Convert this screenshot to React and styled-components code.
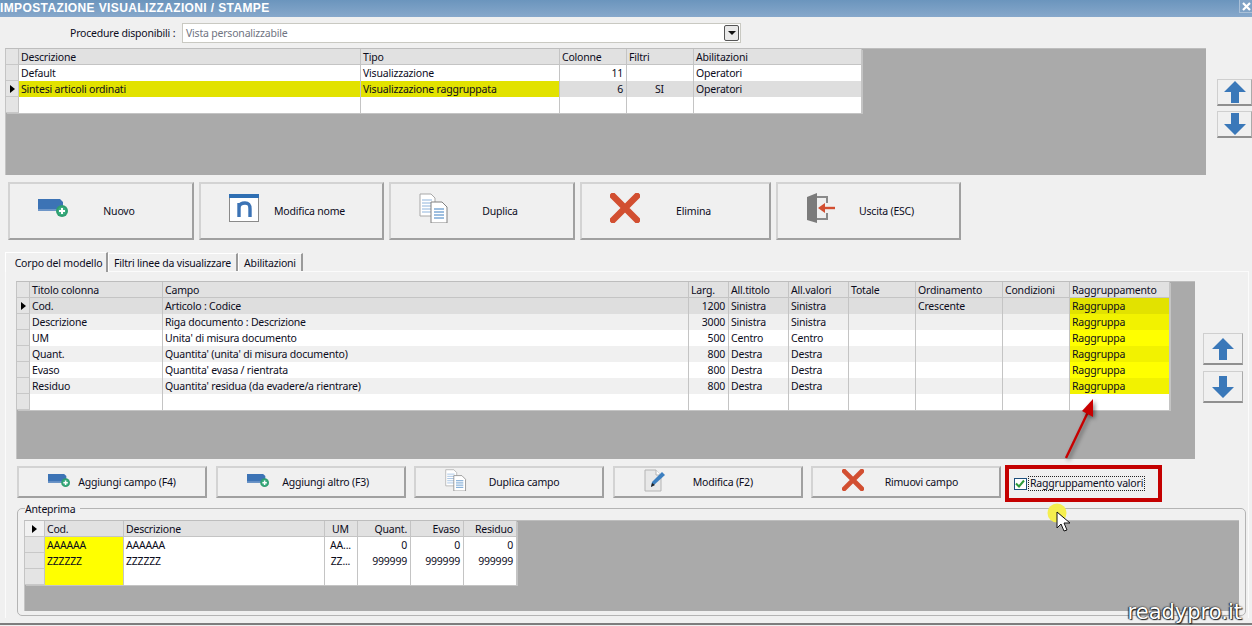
import React from 'react';
import styled, {createGlobalStyle} from 'styled-components';

const GlobalStyle = createGlobalStyle`
  html, body {
    margin: 0;
    padding: 0;
    background: #f0f0f0;
  }
  * {
    box-sizing: border-box;
  }
`;

const Window = styled.div`
  position: relative;
  width: 1252px;
  height: 626px;
  overflow: hidden;
  background: #f0f0f0;
  color: #0c0c1c;
  font-family: "Noto Sans", "DejaVu Sans", sans-serif;
  font-size: 10.5px;
  letter-spacing: -0.2px;
`;

const TitleBar = styled.div`
  display: flex;
  justify-content: space-between;
  height: 17px;
  background: linear-gradient(#6b95bd, #87a8cb);
  color: #fff;
`;

const Title = styled.span`
  font-family: "Liberation Sans", sans-serif;
  font-weight: bold;
  font-size: 12px;
  line-height: 17px;
  letter-spacing: 0.38px;
`;

const CloseButton = styled.div`
  display: flex;
  align-items: center;
  justify-content: center;
  width: 13px;
  height: 13px;
  background: #7fa2c6;
  border-left: 1px solid #a9c0d8;
  border-bottom: 1px solid #a9c0d8;
`;

const ProcedureRow = styled.div`
  display: flex;
  align-items: center;
  height: 20px;
  margin-top: 6px;
  padding-left: 70px;
`;

const ProcedureLabel = styled.span`
  width: 112px;
  white-space: nowrap;
`;

const Select = styled.div`
  display: flex;
  align-items: center;
  justify-content: space-between;
  width: 559px;
  height: 20px;
  padding: 0 1px 0 3px;
  background: #fff;
  border: 1px solid #c9c9c2;
  color: #6f7482;
`;

const SelectButton = styled.div`
  display: flex;
  align-items: center;
  justify-content: center;
  width: 15px;
  height: 16px;
  background: #e9e9e9;
  border: 1px solid #555;
  border-radius: 2px;
  &::after {
    content: '';
    border-left: 4px solid transparent;
    border-right: 4px solid transparent;
    border-top: 4px solid #111;
  }
`;

const TopSection = styled.div`
  display: flex;
  gap: 11px;
  margin-top: 5px;
  padding-left: 5px;
`;

const Grid = styled.div`
  flex: none;
  width: ${props => props.$width}px;
  height: ${props => props.$height}px;
  background: #aaa;
  border-top: 1px solid #bdbdbd;
  border-left: 1px solid #c4c4c4;
`;

const Table = styled.div`
  width: fit-content;
  background: #fff;
  box-shadow: 1px 1px 0 #c4c4c4;
`;

const Row = styled.div`
  display: grid;
  grid-template-columns: ${props => props.$columns};
  height: 16px;
  background: ${props => props.$background};
`;

const Cell = styled.div`
  height: 16px;
  padding: 0 3px 0 2px;
  overflow: hidden;
  white-space: nowrap;
  line-height: 17px;
  text-align: ${props => props.$align || 'left'};
  background: ${props => props.$background || 'transparent'};
  border-right: 1px solid #c4c4c4;
`;

const HeadCell = styled(Cell)`
  background: #e1e1e1;
  border-bottom: 1px solid #c4c4c4;
  line-height: 16px;
`;

const Indicator = styled.div`
  display: flex;
  align-items: center;
  justify-content: center;
  height: 16px;
  background: ${props => props.$white ? '#f1f1f1' : '#e4e4e4'};
  border-right: 1px solid #c4c4c4;
  border-bottom: 1px solid #c8c8c8;
  ${props => props.$current && `
    &::after {
      content: '';
      border-top: 4px solid transparent;
      border-bottom: 4px solid transparent;
      border-left: 5px solid #000;
    }
  `}
`;

const SideButtons = styled.div`
  display: flex;
  flex-direction: column;
  flex: none;
  gap: ${props => props.$gap}px;
  margin-top: ${props => props.$top}px;
`;

const ArrowButton = styled.div`
  display: flex;
  align-items: center;
  justify-content: center;
  width: ${props => props.$width}px;
  height: ${props => props.$height}px;
  background: #f0f0f0;
  border: 1px solid #cfcfcf;
  border-bottom: 2px solid #8f8f8f;
  border-right: 1px solid #aaa;
`;

const ActionRow = styled.div`
  display: flex;
  align-items: flex-start;
  gap: ${props => props.$gap}px;
  height: ${props => props.$height}px;
  margin: ${props => props.$margin};
`;

const ActionButton = styled.div`
  display: grid;
  grid-template-columns: ${props => props.$small ? '22px' : '30px'} 1fr;
  align-items: center;
  flex: none;
  width: ${props => props.$width}px;
  height: 100%;
  padding: ${props => props.$small ? '0 21px 4px 29px' : '0 22px 6px 28px'};
  background: #f0f0f0;
  border-top: 2px solid #d3d3d3;
  border-left: 2px solid #d3d3d3;
  border-right: 2px solid #a0a0a0;
  border-bottom: 2px solid #a0a0a0;
`;

const ActionLabel = styled.span`
  text-align: center;
  white-space: nowrap;
  padding-top: ${props => props.$small ? 4 : 6}px;
`;

const Tabs = styled.div`
  display: flex;
  align-items: flex-end;
  height: 20px;
  margin-top: 11px;
  padding-left: 5px;
`;

const Tab = styled.div`
  display: flex;
  align-items: center;
  justify-content: center;
  width: ${props => props.$width}px;
  height: ${props => props.$active ? 20 : 18}px;
  margin-bottom: ${props => props.$active ? -1 : 0}px;
  padding-left: ${props => props.$active ? 5 : 0}px;
  padding-top: 1px;
  white-space: nowrap;
  background: #f0f0f0;
  border-top: 1px solid #fff;
  border-left: 1px solid #fff;
  border-right: 2px solid #9a9a9a;
  position: relative;
`;

const Panel = styled.div`
  width: 1244px;
  height: 347px;
  margin-left: 5px;
  padding: 9px 0 0 10px;
  border: 1px solid #fbfbfb;
  border-bottom: none;
`;

const GridRow = styled.div`
  display: flex;
  gap: 8px;
`;

const Group = styled.div`
  position: relative;
  width: 1229px;
  height: 108px;
  margin-left: 1px;
  padding: 11px 6px 0;
  border: 1px solid #b4b4b4;
  border-radius: 5px;
`;

const GroupTitle = styled.span`
  position: absolute;
  top: -7px;
  left: 7px;
  padding: 0 5px 0 0;
  line-height: 15px;
  background: #f0f0f0;
`;

const CheckFrame = styled.div`
  display: flex;
  align-items: center;
  flex: none;
  width: 157px;
  height: 37px;
  margin: -1px 0 0 -5px;
  padding-left: 5px;
  border: 4px solid #c40000;
`;

const CheckBox = styled.div`
  display: flex;
  align-items: center;
  justify-content: center;
  width: 13px;
  height: 12px;
  margin-right: 2px;
  background: #fff;
  border: 1px solid #1d4f7c;
`;

const CheckLabel = styled.span`
  padding: 0 1px;
  line-height: 13px;
  outline: 1px dotted #222;
  white-space: nowrap;
`;

const BottomLine = styled.div`
  position: absolute;
  left: 0;
  right: 0;
  bottom: 1px;
  height: 2px;
  background: #7d7d7d;
`;

const Watermark = styled.span`
  position: absolute;
  right: 10px;
  bottom: 1px;
  font-family: "DejaVu Sans", sans-serif;
  font-size: 21px;
  line-height: 26px;
  letter-spacing: 0;
  color: #fff;
  text-shadow: 0 0 2px #111, 1px 1px 1px #222, -1px 0 1px #333;
`;

const Overlay = styled.svg`
  position: absolute;
  left: ${props => props.$left}px;
  top: ${props => props.$top}px;
  pointer-events: none;
`;

const AddIcon = ({small}) => (
   <svg width={small ? 22 : 30} height={small ? 15 : 20} viewBox="0 0 30 20">
      <path d="M0 1h22l3 3v9H0z" fill="#3c73b5"/>
      <path d="M0 11h25v2H0z" fill="#6e96c8"/>
      <circle cx="24" cy="13" r="6" fill="#2f9e70"/>
      <circle cx="24" cy="13" r="4" fill="#3cae80"/>
      <path d="M24 10v6M21 13h6" stroke="#fff" strokeWidth="2"/>
   </svg>
);

const NameIcon = () => (
   <svg width="30" height="28" viewBox="0 0 30 28">
      <rect x="0.5" y="0.5" width="29" height="27" fill="#fff" stroke="#8a8a8a"/>
      <rect width="30" height="4" fill="#2f6fb3"/>
      <path d="M10 23V9M10 14C10 10 13 9 16 9C20 9 21 11 21 15V23" fill="none" stroke="#3c73b5" strokeWidth="3.4"/>
   </svg>
);

const PagesIcon = ({small}) => (
   <svg width={small ? 22 : 30} height={small ? 22 : 30} viewBox="0 0 30 30">
      <path d="M1 1h11l4 4v18H1z" fill="#fff" stroke="#a8a8a8"/>
      <path d="M3 7h10M3 10h10M3 13h10M3 16h10M3 19h10" stroke="#8fb4dc"/>
      <path d="M12 9h11l5 5v16H12z" fill="#fff" stroke="#808080"/>
      <path d="M15 16h10M15 19h10M15 22h10M15 25h10" stroke="#3c7fc0"/>
   </svg>
);

const CrossIcon = ({small}) => (
   <svg width={small ? 22 : 30} height={small ? 22 : 30} viewBox="0 0 30 30">
      <path d="M3 3l24 24M27 3L3 27" stroke="#d24f31" strokeWidth="6.5" strokeLinecap="square"/>
   </svg>
);

const ExitIcon = () => (
   <svg width="30" height="30" viewBox="0 0 30 30">
      <path d="M11 4h10v6M21 20v6H11" fill="none" stroke="#8a8a8a" strokeWidth="2"/>
      <path d="M1 4l10-4v30l-10-3z" fill="#7b7b7b"/>
      <path d="M29 15H16" stroke="#d24f31" strokeWidth="2.4"/>
      <path d="M12 15l7-5v10z" fill="#d24f31"/>
   </svg>
);

const EditIcon = () => (
   <svg width="22" height="23" viewBox="0 0 22 23">
      <path d="M1 1h11l5 5v16H1z" fill="#e8e8e8" stroke="#b4b4b4"/>
      <path d="M12 1v5h5" fill="#fff" stroke="#b4b4b4"/>
      <path d="M7 18l1-5L18 3l3 3L10 16z" fill="#3c7fc0"/>
      <path d="M7 18l1-4 3 2z" fill="#222"/>
   </svg>
);

const ArrowIcon = ({down}) => (
   <svg width="22" height="22" viewBox="0 0 22 22">
      <path d={down ? "M7 0h8v11h7L11 22 0 11h7z" : "M11 0l11 11h-7v11H7V11H0z"} fill="#3a78b9"/>
   </svg>
);

const topColumns = '13px 342px 199px 67px 67px 168px';
const topHead = ['Descrizione', 'Tipo', 'Colonne', 'Filtri', 'Abilitazioni'];
const topRows = [
   {cells: ['Default', 'Visualizzazione', '11', '', 'Operatori'], bg: '#fff'},
   {cells: ['Sintesi articoli ordinati', 'Visualizzazione raggruppata', '6', 'SI', 'Operatori'], bg: '#dedede', current: true},
   {cells: ['', '', '', '', ''], bg: '#fff'},
];
const topAlign = [null, null, 'right', 'center', null];

const fieldColumns = '13px 133px 526px 40px 60px 60px 67px 87px 67px 100px';
const fieldHead = ['Titolo colonna', 'Campo', 'Larg.', 'All.titolo', 'All.valori', 'Totale', 'Ordinamento', 'Condizioni', 'Raggruppamento'];
const fieldAlign = [null, null, 'right'];
const fieldRows = [
   {cells: ['Cod.', 'Articolo : Codice', '1200', 'Sinistra', 'Sinistra', '', 'Crescente', '', 'Raggruppa'], bg: '#dedede', group: '#e2e200', current: true},
   {cells: ['Descrizione', 'Riga documento : Descrizione', '3000', 'Sinistra', 'Sinistra', '', '', '', 'Raggruppa'], bg: '#f0f0f0', group: '#f2f200'},
   {cells: ['UM', "Unita' di misura documento", '500', 'Centro', 'Centro', '', '', '', 'Raggruppa'], bg: '#fff', group: '#ffff00'},
   {cells: ['Quant.', "Quantita' (unita' di misura documento)", '800', 'Destra', 'Destra', '', '', '', 'Raggruppa'], bg: '#f0f0f0', group: '#f2f200'},
   {cells: ['Evaso', "Quantita' evasa / rientrata", '800', 'Destra', 'Destra', '', '', '', 'Raggruppa'], bg: '#fff', group: '#ffff00'},
   {cells: ['Residuo', "Quantita' residua (da evadere/a rientrare)", '800', 'Destra', 'Destra', '', '', '', 'Raggruppa'], bg: '#f0f0f0', group: '#f2f200'},
   {cells: ['', '', '', '', '', '', '', '', ''], bg: '#fff'},
];

const previewColumns = '20px 79px 201px 33px 53px 53px 53px';
const previewHead = ['Cod.', 'Descrizione', 'UM', 'Quant.', 'Evaso', 'Residuo'];
const previewAlign = [null, null, 'center', 'right', 'right', 'right'];
const previewRows = [
   ['AAAAAA', 'AAAAAA', 'AA...', '0', '0', '0'],
   ['ZZZZZZ', 'ZZZZZZ', 'ZZ...', '999999', '999999', '999999'],
   ['', '', '', '', '', ''],
];

const App = () => {
   return (
      <Window>
         <GlobalStyle/>
         <TitleBar>
            <Title>IMPOSTAZIONE VISUALIZZAZIONI / STAMPE</Title>
            <CloseButton>
               <svg width="9" height="9" viewBox="0 0 9 9">
                  <path d="M1 1l7 7M8 1L1 8" stroke="#fff" strokeWidth="2.2"/>
               </svg>
            </CloseButton>
         </TitleBar>

         <ProcedureRow>
            <ProcedureLabel>Procedure disponibili :</ProcedureLabel>
            <Select>
               Vista personalizzabile
               <SelectButton/>
            </Select>
         </ProcedureRow>

         <TopSection>
            <Grid $width={1201} $height={127}>
               <Table>
                  <Row $columns={topColumns}>
                     <Indicator/>
                     {topHead.map((h, i) => <HeadCell key={i}>{h}</HeadCell>)}
                  </Row>
                  {topRows.map((row, r) => (
                     <Row key={r} $columns={topColumns} $background={row.bg}>
                        <Indicator $current={row.current}/>
                        {row.cells.map((c, i) => (
                           <Cell key={i} $align={topAlign[i]} $background={row.current && i < 2 ? '#e2e200' : null}>{c}</Cell>
                        ))}
                     </Row>
                  ))}
               </Table>
            </Grid>
            <SideButtons $top={31} $gap={5}>
               <ArrowButton $width={35} $height={27}><ArrowIcon/></ArrowButton>
               <ArrowButton $width={35} $height={27}><ArrowIcon down/></ArrowButton>
            </SideButtons>
         </TopSection>

         <ActionRow $gap={5} $height={58} $margin="7px 0 0 8px">
            <ActionButton $width={186}><AddIcon/><ActionLabel>Nuovo</ActionLabel></ActionButton>
            <ActionButton $width={185}><NameIcon/><ActionLabel>Modifica nome</ActionLabel></ActionButton>
            <ActionButton $width={186}><PagesIcon/><ActionLabel>Duplica</ActionLabel></ActionButton>
            <ActionButton $width={191}><CrossIcon/><ActionLabel>Elimina</ActionLabel></ActionButton>
            <ActionButton $width={185}><ExitIcon/><ActionLabel>Uscita (ESC)</ActionLabel></ActionButton>
         </ActionRow>

         <Tabs>
            <Tab $active $width={103}>Corpo del modello</Tab>
            <Tab $width={130}>Filtri linee da visualizzare</Tab>
            <Tab $width={65}>Abilitazioni</Tab>
         </Tabs>

         <Panel>
            <GridRow>
               <Grid $width={1179} $height={178}>
                  <Table>
                     <Row $columns={fieldColumns}>
                        <Indicator/>
                        {fieldHead.map((h, i) => <HeadCell key={i}>{h}</HeadCell>)}
                     </Row>
                     {fieldRows.map((row, r) => (
                        <Row key={r} $columns={fieldColumns} $background={row.bg}>
                           <Indicator $current={row.current}/>
                           {row.cells.map((c, i) => (
                              <Cell key={i} $align={fieldAlign[i]} $background={i === 8 ? row.group : null}>{c}</Cell>
                           ))}
                        </Row>
                     ))}
                  </Table>
               </Grid>
               <SideButtons $top={52} $gap={6}>
                  <ArrowButton $width={40} $height={32}><ArrowIcon/></ArrowButton>
                  <ArrowButton $width={40} $height={32}><ArrowIcon down/></ArrowButton>
               </SideButtons>
            </GridRow>

            <ActionRow $gap={8.6} $height={32} $margin="7px 0 10px 1px">
               <ActionButton $small $width={190}><AddIcon small/><ActionLabel $small>Aggiungi campo (F4)</ActionLabel></ActionButton>
               <ActionButton $small $width={190}><AddIcon small/><ActionLabel $small>Aggiungi altro (F3)</ActionLabel></ActionButton>
               <ActionButton $small $width={190}><PagesIcon small/><ActionLabel $small>Duplica campo</ActionLabel></ActionButton>
               <ActionButton $small $width={190}><EditIcon/><ActionLabel $small>Modifica (F2)</ActionLabel></ActionButton>
               <ActionButton $small $width={190}><CrossIcon small/><ActionLabel $small>Rimuovi campo</ActionLabel></ActionButton>
               <CheckFrame>
                  <CheckBox>
                     <svg width="10" height="9" viewBox="0 0 10 9">
                        <path d="M1 4.5l3 3 5-6" fill="none" stroke="#2c9a3a" strokeWidth="2"/>
                     </svg>
                  </CheckBox>
                  <CheckLabel>Raggruppamento valori</CheckLabel>
               </CheckFrame>
            </ActionRow>

            <Group>
               <GroupTitle>Anteprima</GroupTitle>
               <Grid $width={1215} $height={91}>
                  <Table>
                     <Row $columns={previewColumns}>
                        <Indicator $current $white/>
                        {previewHead.map((h, i) => <HeadCell key={i} $align={previewAlign[i]}>{h}</HeadCell>)}
                     </Row>
                     {previewRows.map((row, r) => (
                        <Row key={r} $columns={previewColumns} $background="#fff">
                           <Indicator/>
                           {row.map((c, i) => (
                              <Cell key={i} $align={previewAlign[i]} $background={i === 0 ? '#ffff00' : null}>{c}</Cell>
                           ))}
                        </Row>
                     ))}
                  </Table>
               </Grid>
            </Group>
         </Panel>

         <BottomLine/>
         <Watermark>readypro.it</Watermark>

         <Overlay $left={1056} $top={392} width="50" height="72" viewBox="0 0 50 72">
            <path d="M10 66L32 20" stroke="#c80000" strokeWidth="2.4" style={{filter: 'drop-shadow(2px 2px 2px rgba(0,0,0,.45))'}}/>
            <path d="M37 7L26 19l11 6z" fill="#c80000" style={{filter: 'drop-shadow(2px 2px 2px rgba(0,0,0,.45))'}}/>
         </Overlay>

         <Overlay $left={1046} $top={502} width="26" height="34" viewBox="0 0 26 34">
            <circle cx="11" cy="11" r="9.5" fill="#f5ef4e"/>
            <path d="M11 10v16l4-4 3 7 3-1-3-7h6z" fill="#fff" stroke="#111" strokeWidth="1"/>
         </Overlay>
      </Window>
   );
};

export default App;
